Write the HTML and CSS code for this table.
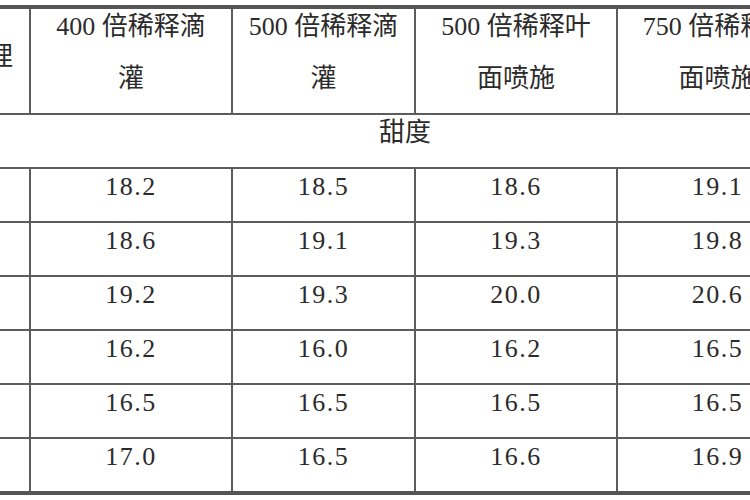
FILE: index.html
```html
<!DOCTYPE html>
<html lang="zh-CN">
<head>
<meta charset="utf-8">
<title>甜度</title>
<link rel="stylesheet" href="styles.css">
</head>
<body>
<table class="grid">
  <colgroup>
    <col class="c1"><col class="c2"><col class="c3"><col class="c4"><col class="c5">
  </colgroup>
  <thead>
    <tr>
      <th class="head first">处理</th>
      <th class="head"><div class="l1">400 倍稀释滴</div><div class="l2">灌</div></th>
      <th class="head"><div class="l1">500 倍稀释滴</div><div class="l2">灌</div></th>
      <th class="head"><div class="l1">500 倍稀释叶</div><div class="l2">面喷施</div></th>
      <th class="head"><div class="l1">750 倍稀释叶</div><div class="l2">面喷施</div></th>
    </tr>
  </thead>
  <tbody>
    <tr><td class="section" colspan="5">甜度</td></tr>
    <tr><td></td><td class="num">18.2</td><td class="num">18.5</td><td class="num">18.6</td><td class="num">19.1</td></tr>
    <tr><td></td><td class="num">18.6</td><td class="num">19.1</td><td class="num">19.3</td><td class="num">19.8</td></tr>
    <tr><td></td><td class="num">19.2</td><td class="num">19.3</td><td class="num">20.0</td><td class="num">20.6</td></tr>
    <tr><td></td><td class="num">16.2</td><td class="num">16.0</td><td class="num">16.2</td><td class="num">16.5</td></tr>
    <tr><td></td><td class="num">16.5</td><td class="num">16.5</td><td class="num">16.5</td><td class="num">16.5</td></tr>
    <tr class="last"><td></td><td class="num">17.0</td><td class="num">16.5</td><td class="num">16.6</td><td class="num">16.9</td></tr>
  </tbody>
</table>
</body>
</html>
```
FILE: styles.css
```css
html, body {
  margin: 0;
  padding: 0;
  overflow: hidden;
  background: #ffffff;
}
body {
  width: 750px;
  height: 500px;
  font-family: "Liberation Serif", "Noto Sans CJK SC", serif;
  font-size: 26px;
  color: #2b2b2b;
}
.grid {
  border-collapse: collapse;
  table-layout: fixed;
  width: 874px;
  margin-top: 5px;
  margin-left: -57px;
  border-top: 4px solid #555555;
  border-bottom: 4px solid #555555;
}
.c1 { width: 86px; }
.c2 { width: 202px; }
.c3 { width: 183px; }
.c4 { width: 202px; }
.c5 { width: 201px; }
.grid th,
.grid td {
  border: 2px solid #5c5c5c;
  padding: 0 0 16px 0;
  text-align: center;
  vertical-align: top;
  font-weight: normal;
  line-height: 36px;
  white-space: nowrap;
  overflow: hidden;
}
.grid th.head {
  border-top: 4px solid #555555;
  padding-bottom: 16px;
}
.grid th.first {
  vertical-align: middle;
  padding: 0 0 8px 0;
}
.l1 { line-height: 36px; }
.l2 { line-height: 36px; margin-top: 16px; }
.grid td {
  height: 36px;
}
.grid td.section {
  padding-left: 48px;
}
.num {
  letter-spacing: 1.5px;
}
.grid tr.last td {
  border-bottom: 4px solid #555555;
}
```
